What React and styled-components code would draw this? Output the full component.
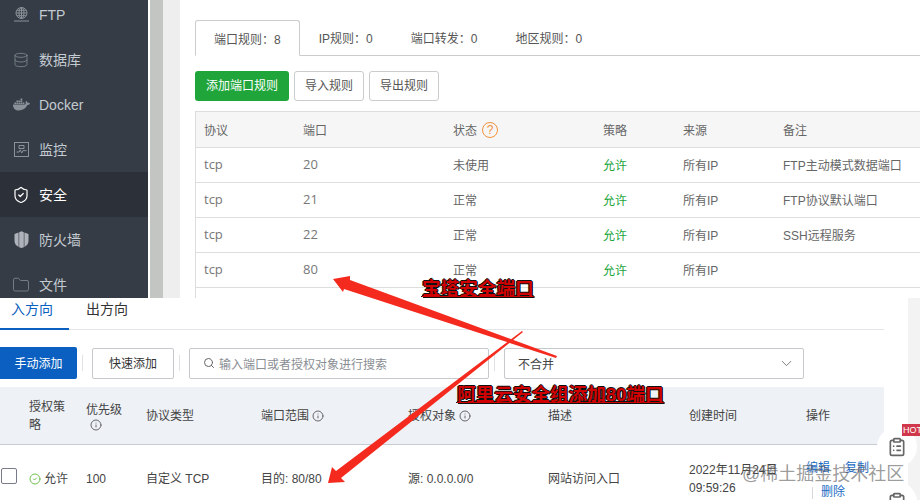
import React from 'react'
import styled, { createGlobalStyle } from 'styled-components'
import { Database, ShieldCheck, Folder, Search, ChevronDown, Info, CircleCheck, ClipboardList } from 'lucide-react'
import { FaDocker } from 'react-icons/fa'

const GlobalStyle = createGlobalStyle`
  html, body { margin: 0; padding: 0; background: #fff; }
  * { box-sizing: border-box; }
  body { font-family: "Liberation Sans", "Noto Sans CJK SC", sans-serif; }
`

const Page = styled.div`
  position: relative;
  width: 920px;
  height: 500px;
  overflow: hidden;
  background: #fff;
`

/* top half, the panel screenshot */
const TopShot = styled.div`
  display: flex;
  height: 298px;
  overflow: hidden;
`
const Sidebar = styled.nav`
  width: 148px;
  flex: none;
  background: #353c45;
  margin-top: -8px;
  height: 306px;
`
const NavItem = styled.div`
  display: flex;
  align-items: center;
  height: 45px;
  padding-left: 12px;
  gap: 9px;
  font-size: 14px;
  line-height: 16px;
  color: ${p => (p.$active ? '#fff' : '#c3cad1')};
  background: ${p => (p.$active ? '#2c3038' : 'transparent')};
`
const NavIcon = styled.span`
  width: 18px;
  height: 18px;
  flex: none;
  display: flex;
  align-items: center;
  justify-content: center;
  color: ${p => (p.$active ? '#fff' : '#8b9198')};
`
const Gutter = styled.div`
  width: 2px;
  flex: none;
`
const GrayStripe = styled.div`
  width: 13px;
  flex: none;
  background: #c3c5c3;
`
const PaleStripe = styled.div`
  width: 17px;
  flex: none;
  background: #eeeeee;
`
const Main = styled.main`
  flex: 1;
  margin-top: 4px;
  background: #fff;
  padding: 16px 0 0 15px;
  border-radius: 3px 0 0 0;
`
const TabBar = styled.div`
  display: flex;
  height: 36px;
  border-bottom: 1px solid #ccc;
`
const Tab = styled.div`
  height: ${p => (p.$active ? '36px' : '35px')};
  padding: 0 ${p => (p.$active ? '18px' : '19px')};
  line-height: 38px;
  font-size: 12px;
  color: #555;
  background: #fff;
  ${p => p.$active && `
    border: 1px solid #ccc;
    border-bottom: 1px solid #fff;
    border-radius: 3px 3px 0 0;
  `}
`
const Toolbar = styled.div`
  display: flex;
  gap: 5px;
  margin-top: 15px;
`
const GreenButton = styled.div`
  width: 94px;
  height: 30px;
  line-height: 30px;
  text-align: center;
  font-size: 12px;
  color: #fff;
  background: #20a53a;
  border-radius: 3px;
`
const PlainButton = styled.div`
  width: 70px;
  height: 30px;
  line-height: 28px;
  text-align: center;
  font-size: 12px;
  color: #555;
  background: #fff;
  border: 1px solid #ccc;
  border-radius: 3px;
`
const PortTable = styled.div`
  margin-top: 10px;
  border-left: 1px solid #ddd;
`
const PortRow = styled.div`
  display: grid;
  grid-template-columns: 99px 150px 150px 80px 100px 1fr;
  align-items: center;
  height: ${p => (p.$head ? '37px' : '35px')};
  font-size: 12px;
  color: #666;
  background: ${p => (p.$head ? '#f6f6f6' : '#fff')};
  border-top: ${p => (p.$head ? '1px solid #ddd' : 'none')};
  border-bottom: ${p => (p.$blank ? 'none' : '1px solid #ddd')};
  padding: 0 0 ${p => (p.$head ? 0 : 2)}px 8px;
`
const Latin = styled.span`
  font-family: "Open Sans", sans-serif;
  font-size: 13px;
  color: #777;
`
const Allow = styled.span`
  color: #20a53a;
`
const StatusHead = styled.span`
  display: flex;
  align-items: center;
  gap: 5px;
`
const HelpMark = styled.span`
  width: 16px;
  height: 16px;
  border: 1px solid #f0923c;
  border-radius: 50%;
  color: #f0923c;
  font-size: 12px;
  line-height: 14px;
  text-align: center;
`

/* bottom half, the cloud console screenshot */
const BottomShot = styled.div`
  display: flex;
  height: 202px;
  overflow: hidden;
`
const Console = styled.section`
  width: 884px;
  flex: none;
`
const Spacer = styled.div`
  width: 24px;
  flex: none;
`
const SideStripe = styled.div`
  flex: 1;
  background: #f3f3f3;
`
const DirectionTabs = styled.div`
  display: flex;
  height: 32px;
  border-bottom: 1px solid #e3e5e8;
`
const DirectionTab = styled.div`
  width: 69px;
  padding-left: ${p => p.$pad}px;
  height: 32px;
  line-height: 22px;
  font-size: 14px;
  color: ${p => (p.$active ? '#0a5fc0' : '#333')};
  border-bottom: ${p => (p.$active ? '2px solid #0a5fc0' : 'none')};
`
const FilterBar = styled.div`
  display: flex;
  align-items: center;
  margin-top: 17px;
`
const BlueButton = styled.div`
  width: 77px;
  height: 32px;
  line-height: 34px;
  text-align: center;
  font-size: 12px;
  color: #fff;
  background: #0a5fc0;
  border-radius: 0 2px 2px 0;
`
const OutlineButton = styled.div`
  width: 82px;
  height: 31px;
  line-height: 31px;
  text-align: center;
  font-size: 12px;
  color: #333;
  border: 1px solid #c6c8cc;
  border-radius: 2px;
`
const Divider = styled.span`
  width: 1px;
  height: 16px;
  background: #dfe1e4;
  margin: 0 9px 0 5px;
`
const Field = styled.div`
  width: 300px;
  height: 31px;
  display: flex;
  align-items: center;
  gap: 4px;
  padding: 0 8px 0 13px;
  font-size: 12px;
  color: ${p => (p.$muted ? '#8a8e94' : '#444')};
  border: 1px solid #c6c8cc;
  border-radius: 2px;
  svg { color: #666; flex: none; }
`
const ChevronSlot = styled.span`
  margin-left: auto;
  display: flex;
`
const RuleTable = styled.div`
  margin-top: 8px;
`
const RuleRow = styled.div`
  display: grid;
  grid-template-columns: 29px 57px 60px 115px 147px 140px 141px 117px 78px;
  align-items: center;
  height: ${p => (p.$head ? '58px' : '68px')};
  font-size: 12px;
  line-height: 18px;
  color: #444;
  background: ${p => (p.$head ? '#eef1f6' : '#fff')};
  border-bottom: ${p => (p.$head ? '1px solid #c8cbd0' : 'none')};
`
const HeadStack = styled.span`
  display: block;
  width: ${p => p.$w || 'auto'};
`
const InfoLine = styled.span`
  display: flex;
  align-items: center;
  gap: 3px;
  padding-left: ${p => p.$pad || 0}px;
  svg { color: #666; }
`
const Checkbox = styled.span`
  display: block;
  width: 16px;
  height: 16px;
  margin-left: 1px;
  margin-top: -6px;
  border: 1px solid #777c88;
  border-radius: 2px;
`
const AllowCell = styled.span`
  display: flex;
  align-items: center;
  gap: 3px;
  svg { color: #6fc04d; }
`
const Links = styled.div`
  display: grid;
  grid-template-columns: 39px 30px;
  padding-top: 2px;
  color: #1c6cc4;
  line-height: 24px;
`
const DeleteLink = styled.span`
  position: relative;
  grid-column: 1 / 3;
  padding-left: 15px;
  &::before {
    content: '';
    position: absolute;
    left: 6px;
    top: 7px;
    width: 1px;
    height: 12px;
    background: #d5d8dc;
  }
`

/* things lying over both screenshots */
const Arrows = styled.svg`
  position: absolute;
  inset: 0;
  pointer-events: none;
`
const RedLabel = styled.div`
  position: absolute;
  left: ${p => p.$x}px;
  top: ${p => p.$y}px;
  font-size: 18.6px;
  line-height: 20px;
  font-weight: 700;
  white-space: nowrap;
  color: #d00000;
  text-decoration: underline;
  text-shadow: 1px 1px 0 #111, -1px 0 0 #111, 0 -1px 0 #111, 1px 0 0 #111;
`
const Float = styled.div`
  position: absolute;
  left: 877px;
  top: ${p => p.$y}px;
  width: 40px;
  height: 40px;
  display: flex;
  align-items: center;
  justify-content: center;
  background: #fff;
  border-radius: 50%;
  color: #666;
`
const Hot = styled.div`
  position: absolute;
  left: 902px;
  top: 424px;
  width: 18px;
  height: 12px;
  overflow: hidden;
  padding-left: 1px;
  font-size: 9px;
  line-height: 12px;
  color: #fff;
  background: #d1374a;
`
const Watermark = styled.div`
  position: absolute;
  left: 742px;
  top: 462px;
  font-size: 18px;
  line-height: 24px;
  white-space: nowrap;
  color: rgba(90, 90, 90, 0.62);
`

function FtpIcon() {
  return (
    <svg width="17" height="17" viewBox="0 0 17 17" fill="none" stroke="currentColor" strokeWidth="1">
      <circle cx="8.5" cy="7" r="5.5" />
      <ellipse cx="8.5" cy="7" rx="2.5" ry="5.5" />
      <path d="M3 7h11M3.8 4.3h9.4M3.8 9.7h9.4M8.5 1.5v11M1 15h15" />
    </svg>
  )
}

function MonitorIcon() {
  return (
    <svg width="15" height="15" viewBox="0 0 15 15" fill="none" stroke="currentColor" strokeWidth="1">
      <rect x="0.5" y="0.5" width="14" height="14" />
      <path d="M2.5 10h2.7l1-2.2 1.6 3.2 1.1-2.4h3.6M5 3.5h5v3H5z" />
    </svg>
  )
}

function WallIcon() {
  return (
    <svg width="15" height="17" viewBox="0 0 15 17" fill="#aeb3b9">
      <path d="M0.5 3 4.6 1.4V16C2 14.6 0.5 12.5 0.5 10zM5.2 1.2 7.5 0.3 9.8 1.2V16.3L7.5 17 5.2 16.3zM10.4 1.4 14.5 3v7c0 2.5-1.5 4.6-4.1 6z" />
    </svg>
  )
}

const navItems = [
  { label: 'FTP', icon: <FtpIcon /> },
  { label: '数据库', icon: <Database size={16} strokeWidth={1.1} /> },
  { label: 'Docker', icon: <FaDocker size={17} /> },
  { label: '监控', icon: <MonitorIcon /> },
  { label: '安全', icon: <ShieldCheck size={18} strokeWidth={1.6} />, active: true },
  { label: '防火墙', icon: <WallIcon /> },
  { label: '文件', icon: <Folder size={18} strokeWidth={1} /> }
]

const ports = [
  ['20', '未使用', 'FTP主动模式数据端口'],
  ['21', '正常', 'FTP协议默认端口'],
  ['22', '正常', 'SSH远程服务'],
  ['80', '正常', '']
]

function App() {
  return (
    <Page>
      <GlobalStyle />
      <TopShot>
        <Sidebar>
          {navItems.map(item => (
            <NavItem key={item.label} $active={item.active}>
              <NavIcon $active={item.active}>{item.icon}</NavIcon>
              {item.label}
            </NavItem>
          ))}
        </Sidebar>
        <Gutter />
        <GrayStripe />
        <PaleStripe />
        <Main>
          <TabBar>
            <Tab $active>端口规则：8</Tab>
            <Tab>IP规则：0</Tab>
            <Tab>端口转发：0</Tab>
            <Tab>地区规则：0</Tab>
          </TabBar>
          <Toolbar>
            <GreenButton>添加端口规则</GreenButton>
            <PlainButton>导入规则</PlainButton>
            <PlainButton>导出规则</PlainButton>
          </Toolbar>
          <PortTable>
            <PortRow $head>
              <span>协议</span>
              <span>端口</span>
              <StatusHead>状态 <HelpMark>?</HelpMark></StatusHead>
              <span>策略</span>
              <span>来源</span>
              <span>备注</span>
            </PortRow>
            {ports.map(row => (
              <PortRow key={row[0]}>
                <Latin>tcp</Latin>
                <Latin>{row[0]}</Latin>
                <span>{row[1]}</span>
                <Allow>允许</Allow>
                <span>所有IP</span>
                <span>{row[2]}</span>
              </PortRow>
            ))}
            <PortRow $blank />
          </PortTable>
        </Main>
      </TopShot>

      <BottomShot>
        <Console>
          <DirectionTabs>
            <DirectionTab $active $pad={11}>入方向</DirectionTab>
            <DirectionTab $pad={17}>出方向</DirectionTab>
          </DirectionTabs>
          <FilterBar>
            <BlueButton>手动添加</BlueButton>
            <Divider />
            <OutlineButton>快速添加</OutlineButton>
            <Divider />
            <Field $muted>
              <Search size={12} />
              输入端口或者授权对象进行搜索
            </Field>
            <Divider />
            <Field>
              不合并
              <ChevronSlot><ChevronDown size={17} strokeWidth={1.2} /></ChevronSlot>
            </Field>
          </FilterBar>
          <RuleTable>
            <RuleRow $head>
              <span />
              <HeadStack $w="40px">授权策略</HeadStack>
              <HeadStack>优先级<InfoLine $pad={4}><Info size={12} /></InfoLine></HeadStack>
              <span>协议类型</span>
              <InfoLine>端口范围 <Info size={12} /></InfoLine>
              <InfoLine>授权对象 <Info size={12} /></InfoLine>
              <span>描述</span>
              <span>创建时间</span>
              <span>操作</span>
            </RuleRow>
            <RuleRow>
              <Checkbox />
              <AllowCell><CircleCheck size={12} />允许</AllowCell>
              <span>100</span>
              <span>自定义 TCP</span>
              <span>目的: 80/80</span>
              <span>源: 0.0.0.0/0</span>
              <span>网站访问入口</span>
              <span>2022年11月24日<br />09:59:26</span>
              <Links>
                <span>编辑</span>
                <span>复制</span>
                <DeleteLink>删除</DeleteLink>
              </Links>
            </RuleRow>
          </RuleTable>
        </Console>
        <Spacer />
        <SideStripe />
      </BottomShot>

      <Arrows width="920" height="500" viewBox="0 0 920 500">
        <polygon fill="#f52a1e" points="333,279 350,276 350,280 557,356 556,358 344,289 343,292" />
        <polygon fill="#f52a1e" points="328,483 332,467 336,471 522,331 523,332 341,478 345,482" />
      </Arrows>
      <RedLabel $x={422} $y={279}>宝塔安全端口</RedLabel>
      <RedLabel $x={457} $y={385}>阿里云安全组添加80端口</RedLabel>
      <Float $y={427}><ClipboardList size={20} /></Float>
      <Float $y={482}><ClipboardList size={20} /></Float>
      <Hot>HOT</Hot>
      <Watermark>@稀土掘金技术社区</Watermark>
    </Page>
  )
}

export default App
